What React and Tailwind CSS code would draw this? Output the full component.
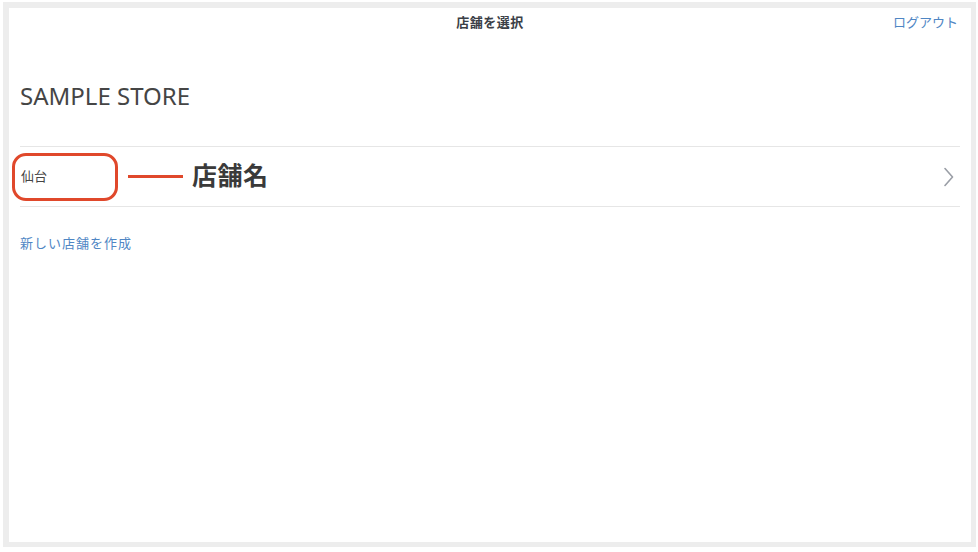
import React from 'react';

function Chevron() {
  return (
    <svg width="10" height="20" viewBox="0 0 10 20" fill="none">
      <path d="M1 1.5L8.5 10L1 18.5" stroke="#9a9ea6" strokeWidth="1.6" strokeLinecap="round" strokeLinejoin="round" />
    </svg>
  );
}

export default function App() {
  return (
    <div className="w-[978px] h-[552px] bg-white pl-[3px] pt-[2px] font-['Noto_Sans','Noto_Sans_CJK_JP',sans-serif]">
      <div className="w-[973px] h-[545px] border-[#ededed] border-l-[6px] border-t-[6px] border-r-[5px] border-b-[5px] bg-white flex flex-col">
        {/* header */}
        <div className="relative h-[30px] flex items-center justify-center">
          <span className="text-[13px] font-bold text-[#3b4047] tracking-[0.5px]">店舗を選択</span>
          <span className="absolute right-[13px] top-1/2 -translate-y-1/2 text-[13px] text-[#4f86c4]">ログアウト</span>
        </div>

        <div className="px-[11px]">
          <h1 className="mt-[43px] text-[24px] leading-[30px] text-[#454545] font-normal">SAMPLE STORE</h1>

          {/* store list */}
          <div className="mt-[35px] border-t border-b border-[#e6e6e6] h-[61px] flex items-center">
            <div className="-ml-[8px] w-[106px] h-[48px] border-[3px] border-[#e0482b] rounded-[14px] flex items-center pl-[6px]">
              <span className="text-[13px] text-[#444]">仙台</span>
            </div>
            <div className="ml-[10px] w-[55px] h-[3px] bg-[#e0482b]" />
            <span className="ml-[9px] text-[25px] font-bold text-[#3a3a3a] leading-none -mt-[3px] tracking-[0.5px]">店舗名</span>
            <div className="ml-auto mr-[6px] flex items-center">
              <Chevron />
            </div>
          </div>

          <div className="mt-[27px] text-[13px] text-[#4f86c4] tracking-[1px]">新しい店舗を作成</div>
        </div>
      </div>
    </div>
  );
}
